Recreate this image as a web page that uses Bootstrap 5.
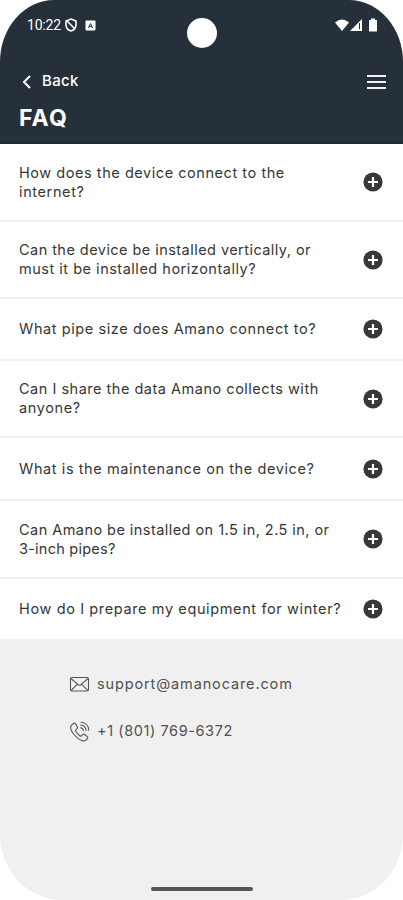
<!DOCTYPE html>
<html lang="en">
<head>
<meta charset="utf-8">
<meta name="viewport" content="width=device-width, initial-scale=1">
<title>FAQ</title>
<link rel="stylesheet" href="https://cdn.jsdelivr.net/npm/bootstrap@5.3.0/dist/css/bootstrap.min.css">
<style>
body{background:#fff;font-family:Inter,"Open Sans",sans-serif;color:#363636}
.phone{width:403px;height:900px;border-radius:54px 54px 62px 62px / 62px 62px 66px 66px;background:#f0f0f0}
.topbar{height:144px;background:#26303a;border-bottom:2px solid #1a2a31;color:#fff}
.status{height:50px;padding:0 25px 0 27px}
.clock{font:400 14px/1 Roboto,sans-serif;letter-spacing:-.2px}
.camera{left:187px;top:18px;width:30px;height:30px}
.navrow{height:62px;padding:1px 16px 0 21px}
.back{font-size:15px;font-weight:500;letter-spacing:.35px;margin-left:9px}
.title{font-size:23px;font-weight:700;line-height:28px;padding-left:19px;margin-top:-8px;letter-spacing:1.2px}
.faq{background:#fff;border-bottom:2px solid #f0f0f0;padding:0 20px 0 19px;font-size:14.5px;line-height:19px}
.faq:last-child{border-bottom:0}
.question{padding-bottom:1px}
.h78{height:78px}.h77{height:77px}.h63{height:63px}.h62{height:62px}.h60{height:60px}
.line{display:block;width:max-content;white-space:nowrap}
.k24{letter-spacing:.24px}.k45{letter-spacing:.45px}.k50{letter-spacing:.51px}.k54{letter-spacing:.55px}.k58{letter-spacing:.59px}.k62{letter-spacing:.62px}.k86{letter-spacing:.87px}
.contact{padding:33px 0 0 69px;font-size:14.5px;color:#505050}
.contact-row{height:24px;margin-bottom:23px;gap:7px}
.homebar{left:151px;top:887px;width:102px;height:4px;background:#555}
</style>
<script src="https://cdn.jsdelivr.net/npm/bootstrap@5.3.0/dist/js/bootstrap.bundle.min.js"></script>
</head>
<body>
<svg class="d-none"><symbol id="plus" viewBox="0 0 20 20"><circle cx="10" cy="10" r="9.6" fill="#383838"/><path d="M10 5v10M5 10h10" stroke="#fff" stroke-width="2.2"/></symbol></svg>
<div class="phone position-relative overflow-hidden">
<header class="topbar">
<div class="status d-flex align-items-center">
<span class="clock line">10:22</span>
<svg class="ms-1" width="12" height="14" viewBox="0 0 12 14" fill="none" stroke="#fff" stroke-width="1.6"><path d="M6 1 11 3v4c0 3-2 5-5 6C3 12 1 10 1 7V3zM2 3l8 8"/></svg>
<svg class="ms-2" width="11" height="11" viewBox="0 0 11 11"><rect x=".5" y=".5" width="10" height="10" rx="1" fill="#fff"/><path d="M3.500 8 5.500 3.500l2 4.500M4.200 6.500h2.600" fill="none" stroke="#26303a"/></svg>
<svg class="ms-auto" width="44" height="16" viewBox="0 0 44 16" fill="#fff"><path d="M1 5.500Q8-.5 15 5.500L8 14zM28 2v12H16z"/><path d="M25.500 6v6" stroke="#26303a"/><path d="M35 3h2V1.500h4V3h2v11.500h-8z"/></svg>
</div>
<div class="navrow d-flex align-items-center">
<svg width="12" height="16" viewBox="0 0 12 16" fill="none" stroke="#fff" stroke-width="2"><path d="M9 2 3 8l6 6"/></svg>
<span class="back line">Back</span>
<svg class="ms-auto" width="21" height="16" viewBox="0 0 21 16"><path d="M1 2h19M1 8h19M1 14h19" stroke="#f2f2f2" stroke-width="2.2"/></svg>
</div>
<h1 class="title mb-0">FAQ</h1>
</header>
<main>
<div class="faq h78 d-flex align-items-center justify-content-between"><div class="question"><span class="line k54">How does the device connect to the</span><span class="line k62">internet?</span></div><svg width="20" height="20"><use href="#plus"/></svg></div>
<div class="faq h77 d-flex align-items-center justify-content-between"><div class="question"><span class="line k45">Can the device be installed vertically, or</span><span class="line k50">must it be installed horizontally?</span></div><svg width="20" height="20"><use href="#plus"/></svg></div>
<div class="faq h62 d-flex align-items-center justify-content-between"><div class="question"><span class="line k58">What pipe size does Amano connect to?</span></div><svg width="20" height="20"><use href="#plus"/></svg></div>
<div class="faq h77 d-flex align-items-center justify-content-between"><div class="question"><span class="line k50">Can I share the data Amano collects with</span><span class="line k62">anyone?</span></div><svg width="20" height="20"><use href="#plus"/></svg></div>
<div class="faq h63 d-flex align-items-center justify-content-between"><div class="question"><span class="line k58">What is the maintenance on the device?</span></div><svg width="20" height="20"><use href="#plus"/></svg></div>
<div class="faq h78 d-flex align-items-center justify-content-between"><div class="question"><span class="line k45">Can Amano be installed on 1.5 in, 2.5 in, or</span><span class="line k24">3-inch pipes?</span></div><svg width="20" height="20"><use href="#plus"/></svg></div>
<div class="faq h60 d-flex align-items-center justify-content-between"><div class="question"><span class="line k62">How do I prepare my equipment for winter?</span></div><svg width="20" height="20"><use href="#plus"/></svg></div>
</main>
<div class="contact">
<div class="contact-row d-flex align-items-center">
<svg width="21" height="18" viewBox="0 0 21 18" fill="none" stroke="#555" stroke-width="1.100"><rect x="1.500" y="2.500" width="18" height="13.500" rx="1.500"/><path d="m2 3.500 7 6.200q1.500 1.200 3 0l7-6.200M2.200 15.300l6-6M18.800 15.300l-6-6"/></svg>
<span class="line k86">support@amanocare.com</span></div>
<div class="contact-row d-flex align-items-center">
<svg width="21" height="21" viewBox="0 0 21 21" fill="none" stroke="#555" stroke-width="1.100" stroke-linecap="round" stroke-linejoin="round"><path d="M4.500 2.500 2.600 4.200C.8 6.200 2 10 5.500 14c3.800 4.200 8.300 6.700 11 5.400l2-1.900q.8-1-.2-1.900l-2.700-2.100q-1-.7-1.900.2l-1.200 1.200q-1 .5-2-.4-2.200-1.800-3.700-4.200-.5-.9.200-1.600l1.100-1.100q.8-.9.200-1.900L6.400 2.700q-.9-1.100-1.900-.2z"/><path d="M12 1.200c4.500.3 7.600 3.600 7.800 8M11.700 4c3.100.3 5.100 2.400 5.400 5.400M11.500 6.800c1.700.2 2.700 1.200 2.900 2.900"/></svg>
<span class="line k58">+1 (801) 769-6372</span></div>
</div>
<div class="homebar position-absolute rounded-pill"></div>
<div class="camera position-absolute rounded-circle bg-white"></div>
</div>
</body>
</html>
